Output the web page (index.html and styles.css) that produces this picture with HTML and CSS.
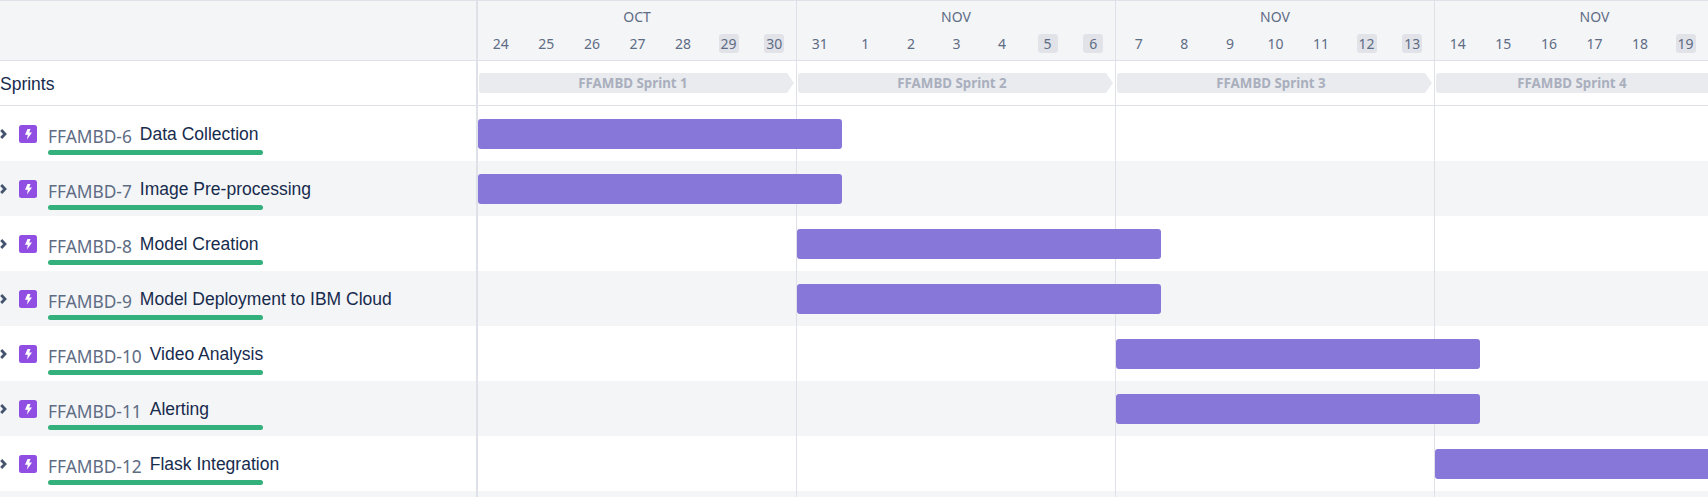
FILE: index.html
```html
<!DOCTYPE html>
<html lang="en">
<head>
  <meta charset="UTF-8" />
  <title>Roadmap</title>
  <link rel="stylesheet" href="styles.css">
</head>
<body>

  <svg class="icon-defs" width="0" height="0">
    <symbol id="epic" viewBox="0 0 18 18">
      <rect width="18" height="18" rx="2.5" fill="#904ee2"/>
      <path d="M8.5 4h3l-1.3 3.6H13l-5 6.8.8-4.6H6z" fill="#fff"/>
    </symbol>
    <symbol id="chevron" viewBox="0 0 8 10">
      <path d="M1.2 1 5 5 1.2 9" fill="none" stroke="#44546f" stroke-width="2.8"/>
    </symbol>
  </svg>

  <div class="page">
    <header class="timeline-head">
      <div class="side"></div>
      <div class="weeks">
        <div class="week">
          <div class="month">OCT</div>
          <div class="days">
            <span>24</span><span>25</span><span>26</span><span>27</span><span>28</span><span class="weekend">29</span><span class="weekend">30</span>
          </div>
        </div>
        <div class="week">
          <div class="month">NOV</div>
          <div class="days">
            <span>31</span><span>1</span><span>2</span><span>3</span><span>4</span><span class="weekend">5</span><span class="weekend">6</span>
          </div>
        </div>
        <div class="week">
          <div class="month">NOV</div>
          <div class="days">
            <span>7</span><span>8</span><span>9</span><span>10</span><span>11</span><span class="weekend">12</span><span class="weekend">13</span>
          </div>
        </div>
        <div class="week">
          <div class="month">NOV</div>
          <div class="days">
            <span>14</span><span>15</span><span>16</span><span>17</span><span>18</span><span class="weekend">19</span>
          </div>
        </div>
      </div>
    </header>

    <section class="sprint-row">
      <div class="side sprints-label">Sprints</div>
      <div class="sprints">
        <div class="sprint">FFAMBD Sprint 1</div>
        <div class="sprint">FFAMBD Sprint 2</div>
        <div class="sprint">FFAMBD Sprint 3</div>
        <div class="sprint sprint-open">FFAMBD Sprint 4</div>
      </div>
    </section>

    <main>
      <div class="row">
        <div class="side issue">
          <svg class="chevron"><use href="#chevron"/></svg>
          <svg class="epic-icon"><use href="#epic"/></svg>
          <div class="issue-body">
            <div class="issue-text"><span class="key">FFAMBD-6</span><span class="name">Data Collection</span></div>
            <div class="done-bar"></div>
          </div>
        </div>
        <div class="chart"><div class="bar start-0"></div></div>
      </div>

      <div class="row">
        <div class="side issue">
          <svg class="chevron"><use href="#chevron"/></svg>
          <svg class="epic-icon"><use href="#epic"/></svg>
          <div class="issue-body">
            <div class="issue-text"><span class="key">FFAMBD-7</span><span class="name">Image Pre-processing</span></div>
            <div class="done-bar"></div>
          </div>
        </div>
        <div class="chart"><div class="bar start-0"></div></div>
      </div>

      <div class="row">
        <div class="side issue">
          <svg class="chevron"><use href="#chevron"/></svg>
          <svg class="epic-icon"><use href="#epic"/></svg>
          <div class="issue-body">
            <div class="issue-text"><span class="key">FFAMBD-8</span><span class="name">Model Creation</span></div>
            <div class="done-bar"></div>
          </div>
        </div>
        <div class="chart"><div class="bar start-7"></div></div>
      </div>

      <div class="row">
        <div class="side issue">
          <svg class="chevron"><use href="#chevron"/></svg>
          <svg class="epic-icon"><use href="#epic"/></svg>
          <div class="issue-body">
            <div class="issue-text"><span class="key">FFAMBD-9</span><span class="name">Model Deployment to IBM Cloud</span></div>
            <div class="done-bar"></div>
          </div>
        </div>
        <div class="chart"><div class="bar start-7"></div></div>
      </div>

      <div class="row">
        <div class="side issue">
          <svg class="chevron"><use href="#chevron"/></svg>
          <svg class="epic-icon"><use href="#epic"/></svg>
          <div class="issue-body">
            <div class="issue-text"><span class="key">FFAMBD-10</span><span class="name">Video Analysis</span></div>
            <div class="done-bar"></div>
          </div>
        </div>
        <div class="chart"><div class="bar start-14"></div></div>
      </div>

      <div class="row">
        <div class="side issue">
          <svg class="chevron"><use href="#chevron"/></svg>
          <svg class="epic-icon"><use href="#epic"/></svg>
          <div class="issue-body">
            <div class="issue-text"><span class="key">FFAMBD-11</span><span class="name">Alerting</span></div>
            <div class="done-bar"></div>
          </div>
        </div>
        <div class="chart"><div class="bar start-14"></div></div>
      </div>

      <div class="row">
        <div class="side issue">
          <svg class="chevron"><use href="#chevron"/></svg>
          <svg class="epic-icon"><use href="#epic"/></svg>
          <div class="issue-body">
            <div class="issue-text"><span class="key">FFAMBD-12</span><span class="name">Flask Integration</span></div>
            <div class="done-bar"></div>
          </div>
        </div>
        <div class="chart"><div class="bar start-21"></div></div>
      </div>

      <div class="row">
        <div class="side"></div>
        <div class="chart"></div>
      </div>
    </main>
  </div>

</body>
</html>
```

FILE: styles.css
```css
body {
  margin: 0;
  background: #fff;
  font-family: 'Liberation Sans', Arial, sans-serif;
  color: #172b4d;
}

.icon-defs {
  position: absolute;
  width: 0;
  height: 0;
}

.page {
  height: 100vh;
  overflow: hidden;
}

.side {
  flex: 0 0 476px;
  width: 476px;
  border-right: 2px solid #dfe1e8;
}

/* header with months and days */
.timeline-head {
  display: flex;
  height: 59px;
  background: #f4f5f7;
  border-top: 1px solid #dfe1e8;
  border-bottom: 1px solid #dfe1e8;
}

.weeks {
  display: flex;
  flex: none;
  width: 1230px;
}

.week {
  flex: 0 0 319px;
  width: 319px;
  box-sizing: border-box;
  border-right: 1px solid #dfe1e8;
  font-family: 'Noto Sans', sans-serif;
  color: #5e6c84;
}

.week:last-child {
  flex-basis: 274px;
  width: 274px;
  border-right: 0;
}

.month {
  height: 33px;
  line-height: 32px;
  font-size: 14px;
  text-align: center;
}

.week:last-child .month {
  width: 319px;
}

.days {
  display: grid;
  grid-template-columns: repeat(7, 45.57px);
  font-size: 14px;
}

.days span {
  display: flex;
  justify-content: center;
  justify-self: center;
  width: 20px;
  height: 19px;
  line-height: 19px;
  border-radius: 3px;
  white-space: nowrap;
}

.days .weekend {
  background: #e1e3e9;
}

/* sprints row */
.sprint-row {
  display: flex;
  height: 44px;
  border-bottom: 1px solid #dfe1e8;
}

.sprints-label {
  font-size: 17.5px;
  line-height: 46px;
}

.sprints {
  display: flex;
  flex: none;
  width: 1230px;
  padding-top: 12px;
  box-sizing: border-box;
  background: repeating-linear-gradient(to right, transparent 0, transparent 318px, #dfe1e8 318px, #dfe1e8 319px);
}

.sprint {
  flex: 0 0 315px;
  width: 315px;
  height: 20px;
  box-sizing: border-box;
  margin: 0 3px 0 1px;
  padding-right: 7px;
  background: #e9ebef;
  border-radius: 3px 0 0 3px;
  clip-path: polygon(0 0, 308px 0, 315px 10px, 308px 20px, 0 20px);
  font-family: 'Noto Sans', sans-serif;
  font-size: 13.33px;
  font-weight: 700;
  line-height: 20px;
  text-align: center;
  color: #a9afbd;
}

.sprint-open {
  flex-basis: 272px;
  width: 272px;
  margin-right: 0;
  padding-right: 0;
  clip-path: none;
}

/* issue rows */
.row {
  display: flex;
  height: 55px;
}

.row:nth-child(even) {
  background: #f4f5f7;
}

.issue {
  display: flex;
  align-items: flex-start;
}

.chevron {
  flex: none;
  width: 8px;
  height: 10px;
  margin-top: 23px;
}

.epic-icon {
  flex: none;
  width: 18px;
  height: 18px;
  margin: 19px 0 0 11px;
}

.issue-body {
  width: 215px;
  margin: 14px 0 0 11px;
}

.issue-text {
  display: flex;
  align-items: center;
  gap: 8px;
  height: 30px;
  white-space: nowrap;
}

.key {
  font-family: 'Noto Sans', sans-serif;
  font-size: 17.33px;
  color: #5e6c84;
  padding-top: 2px;
}

.name {
  font-size: 17.5px;
  color: #172b4d;
  padding-bottom: 2px;
}

.done-bar {
  height: 5px;
  border-radius: 3px;
  background: #33b07c;
}

.chart {
  flex: 1;
  display: grid;
  grid-template-columns: repeat(28, 45.57px);
  padding-top: 13px;
  overflow: hidden;
  background: repeating-linear-gradient(to right, transparent 0, transparent 318px, #dfe1e8 318px, #dfe1e8 319px);
}

.bar {
  grid-row: 1;
  height: 30px;
  margin-right: 0.5px;
  border-radius: 3px;
  background: #8777d9;
}

.start-0 {
  grid-column: 1 / span 8;
}

.start-7 {
  grid-column: 8 / span 8;
}

.start-14 {
  grid-column: 15 / span 8;
}

.start-21 {
  grid-column: 22 / span 8;
}
```
